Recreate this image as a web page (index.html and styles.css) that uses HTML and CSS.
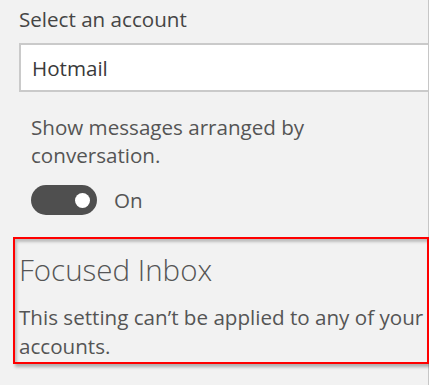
FILE: index.html
```html
<!DOCTYPE html>
<html lang="en">
<head>
<meta charset="utf-8">
<title>Settings</title>
<link rel="stylesheet" href="styles.css">
</head>
<body>
<div class="panel">
  <div class="label">Select an account</div>
  <div class="select"><span class="select-text">Hotmail</span></div>
  <div class="desc">Show messages arranged by<br>conversation.</div>
  <div class="toggle-row">
    <div class="toggle"><span class="knob"></span></div>
    <span class="toggle-text">On</span>
  </div>
  <div class="focused">
    <div class="heading">Focused Inbox</div>
    <div class="para">This setting can’t be applied to any of your<br>accounts.</div>
  </div>
</div>
</body>
</html>
```
FILE: styles.css
```css
html, body {
  margin: 0;
  padding: 0;
}
body {
  width: 429px;
  height: 385px;
  overflow: hidden;
  background: linear-gradient(to left, #c6c6c6 1px, #f2f2f2 1px);
  font-family: "Open Sans", "Noto Sans", sans-serif;
  color: #555555;
}
.panel {
  width: 429px;
  height: 385px;
  overflow: hidden;
  display: flex;
  flex-direction: column;
}
.label {
  padding: 5px 0 0 19px;
  font-size: 20.6px;
  line-height: 28px;
  color: #454545;
  white-space: nowrap;
}
.select {
  margin: 10px 1px 0 19px;
  height: 49px;
  box-sizing: border-box;
  border: 2px solid #cacaca;
  border-right: none;
  background: #ffffff;
  display: flex;
  align-items: center;
  padding-left: 11px;
}
.select-text {
  font-size: 20.6px;
  line-height: 28px;
  color: #3a3a3a;
}
.desc {
  margin: 21px 0 0 31px;
  font-size: 20.6px;
  line-height: 28px;
  white-space: nowrap;
}
.toggle-row {
  margin: 16px 0 0 31px;
  display: flex;
  align-items: center;
  gap: 17px;
}
.toggle {
  width: 66px;
  height: 30px;
  border-radius: 15px;
  background: #4f4f4f;
  display: flex;
  align-items: center;
  justify-content: flex-end;
  padding-right: 7px;
  box-sizing: border-box;
}
.knob {
  width: 15px;
  height: 15px;
  border-radius: 50%;
  background: #ffffff;
}
.toggle-text {
  font-size: 20.6px;
  line-height: 28px;
}
.focused {
  margin: 22px 0 0 13px;
  height: 127px;
  box-sizing: border-box;
  border: 2px solid #ff0000;
  padding: 11px 0 0 4px;
  box-shadow: 2px 3px 3px rgba(0, 0, 0, 0.28), inset 2px 3px 3px rgba(0, 0, 0, 0.22);
  white-space: nowrap;
}
.heading {
  font-size: 29.5px;
  line-height: 40px;
  font-weight: 300;
}
.para {
  margin-top: 13px;
  font-size: 20.6px;
  line-height: 29px;
}
```
